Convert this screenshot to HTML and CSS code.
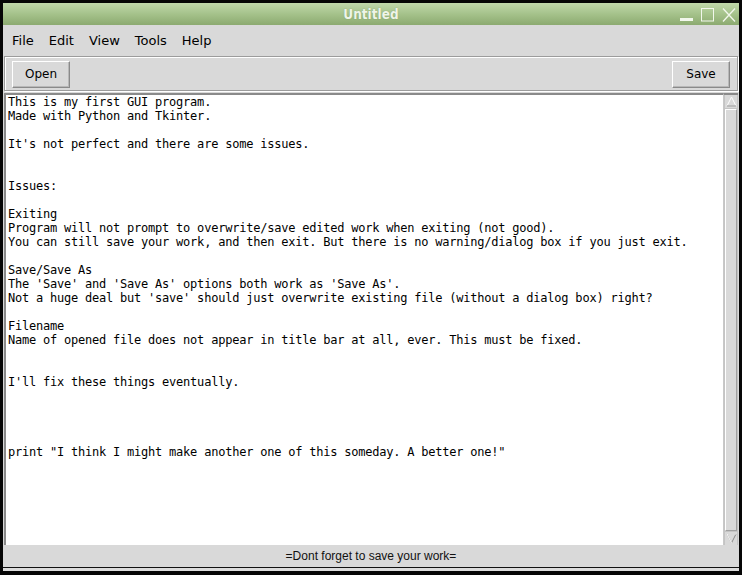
FILE: index.html
```html
<!DOCTYPE html>
<html>
<head>
<meta charset="utf-8">
<title>Untitled</title>
<link rel="stylesheet" href="styles.css">
</head>
<body>
<div class="window">
  <div class="titlebar">
    <span class="title">Untitled</span>
    <div class="wm-buttons">
      <svg class="wm-min" width="13" height="14" viewBox="0 0 13 14"><rect x="0" y="10" width="13" height="3" fill="#f2f7ec"/></svg>
      <svg class="wm-max" width="13" height="14" viewBox="0 0 13 14"><rect x="0.5" y="0.5" width="12" height="12.5" fill="none" stroke="#f2f7ec" stroke-width="1"/></svg>
      <svg class="wm-close" width="14" height="14" viewBox="0 0 14 14"><path d="M1 0.5 L13 13.5 M13 0.5 L1 13.5" stroke="#f2f7ec" stroke-width="1.3" fill="none"/></svg>
    </div>
  </div>
  <div class="menubar">
    <span class="menu">File</span>
    <span class="menu">Edit</span>
    <span class="menu">View</span>
    <span class="menu">Tools</span>
    <span class="menu">Help</span>
  </div>
  <div class="toolbar">
    <button class="btn">Open</button>
    <button class="btn">Save</button>
  </div>
  <div class="editor">
    <pre class="text">This is my first GUI program.
Made with Python and Tkinter.

It's not perfect and there are some issues.


Issues:

Exiting
Program will not prompt to overwrite/save edited work when exiting (not good).
You can still save your work, and then exit. But there is no warning/dialog box if you just exit.

Save/Save As
The 'Save' and 'Save As' options both work as 'Save As'.
Not a huge deal but 'save' should just overwrite existing file (without a dialog box) right?

Filename
Name of opened file does not appear in title bar at all, ever. This must be fixed.


I'll fix these things eventually.




print "I think I might make another one of this someday. A better one!"</pre>
    <div class="scrollbar">
      <div class="arrow up"><svg width="11" height="11" viewBox="0 0 11 11"><polygon points="5.5,1 10,10 1,10" fill="#d9d9d9" stroke="#fff" stroke-width="1"/><path d="M10 10 L1 10" stroke="#8a8a8a" stroke-width="1"/></svg></div>
      <div class="trough"></div>
      <div class="arrow down"><svg width="11" height="11" viewBox="0 0 11 11"><polygon points="1,1 10,1 5.5,10" fill="#d9d9d9" stroke="#8a8a8a" stroke-width="1"/><path d="M1 1 L10 1 M1 1 L5.5 10" stroke="#fff" stroke-width="1"/></svg></div>
    </div>
  </div>
  <div class="status">=Dont forget to save your work=</div>
  <div class="bottom-edge"></div>
</div>
</body>
</html>
```
FILE: styles.css
```css
html, body {
  margin: 0;
  padding: 0;
  background: #060606;
  width: 742px;
  height: 575px;
  overflow: hidden;
}
body {
  padding: 3px 3px 0 3px;
  box-sizing: border-box;
}
.window {
  width: 736px;
  height: 568px;
  display: flex;
  flex-direction: column;
  background: #d9d9d9;
  font-family: "DejaVu Sans", sans-serif;
  font-size: 12px;
  color: #000;
}
.titlebar {
  height: 22px;
  flex: none;
  background: linear-gradient(#c0d8aa, #a5c28b 50%, #8caa70);
  display: flex;
  align-items: center;
  justify-content: center;
  position: relative;
}
.title {
  font-family: "DejaVu Sans Condensed", "DejaVu Sans", sans-serif;
  font-weight: bold;
  font-size: 13.5px;
  color: #eef4e8;
  text-shadow: 0 0 1px rgba(90,120,60,0.6);
}
.wm-buttons {
  position: absolute;
  right: 3px;
  top: 5px;
  display: flex;
  gap: 8px;
}
.menubar {
  height: 31px;
  flex: none;
  display: flex;
  align-items: center;
  padding-left: 9px;
  padding-top: 0;
  box-sizing: border-box;
  font-size: 13px;
}
.menu {
  margin-right: 15px;
}
.toolbar {
  height: 35px;
  flex: none;
  display: flex;
  justify-content: space-between;
  align-items: center;
  box-sizing: border-box;
  margin: 0 1px 0 1px;
  border: 1px solid #9c9c9c;
  box-shadow: inset 1px 1px 0 #fff, 1px 1px 0 #fff;
  padding: 0 7px 0 7px;
}
.btn {
  font-family: "DejaVu Sans", sans-serif;
  font-size: 12px;
  color: #000;
  background: #d9d9d9;
  width: 58px;
  height: 27px;
  padding: 0;
  border: 1px solid;
  border-color: #fff #8a8a8a #8a8a8a #fff;
  box-shadow: inset -1px -1px 0 #b8b8b8;
  border-radius: 0;
  margin-top: 1px;
}
.editor {
  flex: 1;
  display: flex;
  margin: 2px 1px 0 1px;
  min-height: 0;
}
.text {
  flex: 1;
  margin: 0;
  background: #fff;
  border-top: 2px solid #8a8a8a;
  border-left: 2px solid #8a8a8a;
  border-right: 1px solid #c8c8c8;
  padding: 0 0 0 2px;
  font-family: "DejaVu Sans Mono", monospace;
  font-size: 12px;
  letter-spacing: -0.22px;
  line-height: 14px;
  color: #000;
  overflow: hidden;
  white-space: pre;
}
.scrollbar {
  width: 14px;
  flex: none;
  display: flex;
  flex-direction: column;
  background: #c4c4c4;
  border-top: 2px solid #8a8a8a;
  box-sizing: border-box;
  padding: 0 1px 0 1px;
}
.arrow {
  height: 13px;
  display: flex;
  align-items: center;
  justify-content: center;
  background: #d9d9d9;
  flex: none;
}
.trough {
  flex: 1;
  background: #d9d9d9;
  border: 1px solid;
  border-color: #fff #a0a0a0 #a0a0a0 #fff;
  margin: 1px 0;
}
.status {
  height: 22px;
  flex: none;
  display: flex;
  align-items: center;
  justify-content: center;
  font-family: "Liberation Sans", Arial, sans-serif;
  font-size: 12px;
  color: #111;
}
.bottom-edge {
  height: 4px;
  flex: none;
  background: #dcdcdc;
  border-top: 1px solid #111;
  box-sizing: border-box;
}
```
